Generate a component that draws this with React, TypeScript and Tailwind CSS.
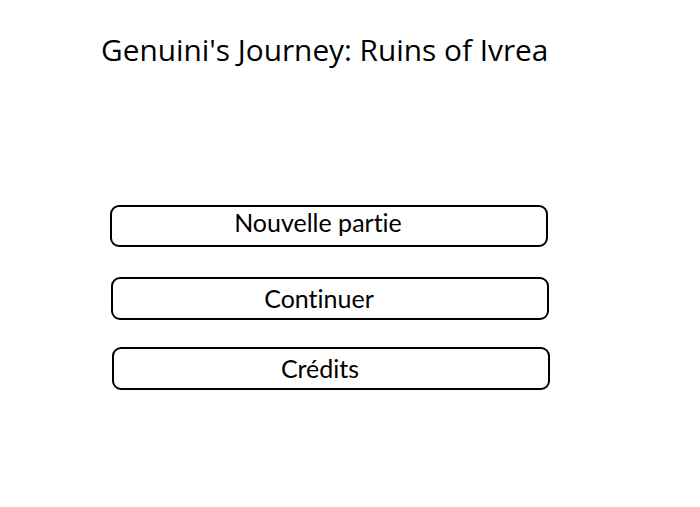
import React from 'react';

const items = [
  { label: 'Nouvelle partie', className: 'ml-[110px] mt-[139px] h-[42px] pb-[7px]' },
  { label: 'Continuer', className: 'ml-[111px] mt-[30px] h-[43px] pb-0' },
  { label: 'Crédits', className: 'ml-[112px] mt-[27px] h-[43px] pb-0' },
];

export default function App() {
  return (
    <div className="w-[700px] h-[507px] bg-white overflow-hidden flex flex-col">
      <h1 className="ml-[101px] mt-[34px] text-[29.8px] leading-[32px] text-black font-['Open_Sans',sans-serif] font-normal whitespace-nowrap">
        Genuini's Journey: Ruins of Ivrea
      </h1>
      {items.map((item) => (
        <button
          key={item.label}
          type="button"
          className={`${item.className} w-[438px] border-2 border-black rounded-[9px] bg-white flex items-center justify-center pr-[22px] text-[25px] text-black font-['Lato',sans-serif] [font-variant-ligatures:none]`}
        >
          {item.label}
        </button>
      ))}
    </div>
  );
}
